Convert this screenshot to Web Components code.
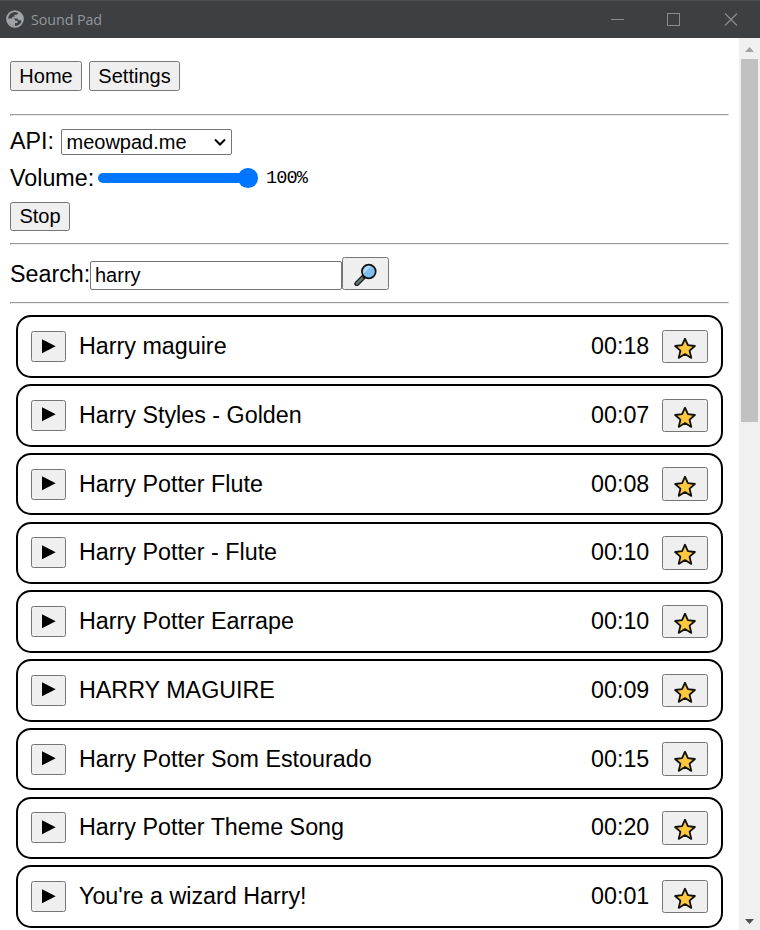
<!DOCTYPE html>
<html lang="en">
<head>
<meta charset="utf-8">
<title>Sound Pad</title>
<style>
html, body { margin: 0; height: 930px; overflow: hidden; background: #fff; }
body { font-family: "Liberation Sans", Arial, sans-serif; font-size: 23.300px; color: #000; }
</style>
</head>
<body>
<sound-pad></sound-pad>
<script>
const define = (name, html, setup) => {
  const template = document.createElement('template');
  template.innerHTML = html;
  customElements.define(name, class extends HTMLElement {
    constructor() {
      super();
      this.attachShadow({ mode: 'open' }).append(template.content.cloneNode(true));
    }
    connectedCallback() { if (setup) setup(this, this.shadowRoot); }
  });
};

define('title-bar', `
<style>
:host { display: flex; align-items: center; box-sizing: border-box; height: 38px; flex: none; background: #3c4043; border-top: 1px solid #4b4f52; color: #93979a; font: 14.300px "Open Sans", "Noto Sans", sans-serif; }
.globe { width: 18px; height: 18px; margin: 0 7px 2px 6px; }
.name { flex: 1; letter-spacing: -.08px; padding-bottom: 1px; }
.controls { display: flex; height: 37px; }
.controls svg { width: 57px; height: 37px; }
</style>
<svg class="globe" viewBox="0 0 18 18"><circle cx="9" cy="9" r="7.900" fill="none" stroke="#a0a4a8" stroke-width="1.900"/><path fill="#a0a4a8" d="M1.500 8.500h5.300c1.500 0 2.500 1 2.500 2.300h2.200v2.300H9v2.800c-3.900.3-7.400-3.200-7.500-7.400zM7.500 1.500h4.300v2c0 .8-.7 1.300-1.500 1.300H8.500v2H6.300v1.700h4.400c1.200 0 1.600.8 1.600 1.800h1.600c1 0 1.700.6 1.900 1.500 2.200-4.600-.4-10.300-5.800-10.300z"/></svg>
<span class="name"><slot></slot></span>
<div class="controls">
<svg viewBox="0 0 57 37" stroke="#888c8f" fill="none" shape-rendering="crispEdges"><path d="M22 18.500h13"/></svg>
<svg viewBox="0 0 57 37" stroke="#888c8f" fill="none" shape-rendering="crispEdges"><path d="M21.500 12.500h12v12h-12z"/></svg>
<svg viewBox="0 0 57 37" stroke="#888c8f" stroke-width="1.200" fill="none"><path d="M22 12.500l12 12m0-12l-12 12"/></svg>
</div>`);

define('scroll-rail', `
<style>
:host { display: flex; flex-direction: column; align-items: center; width: 21px; flex: none; background: #f0f0f0; }
svg { width: 21px; height: 21px; flex: none; }
.thumb { width: 17px; height: 363px; background: #c1c1c1; }
.rest { flex: 1; }
</style>
<svg viewBox="0 0 21 21"><path fill="#a3a3a3" d="M6 14l4.500-5 4.500 5z"/></svg>
<div class="thumb"></div><div class="rest"></div>
<svg viewBox="0 0 21 21"><path fill="#505050" d="M6 10h9l-4.500 5z"/></svg>`);

define('push-button', `
<style>
:host { display: flex; flex: none; }
button { display: flex; align-items: center; justify-content: center; box-sizing: border-box; width: 100%; height: 100%; margin: 0; padding: 0; border: 1px solid #767676; border-radius: 2.500px; background: #efefef; color: #000; font: 20px "Liberation Sans", Arial, sans-serif; }
</style>
<button><slot></slot></button>`);

define('rule-line', `
<style>:host { display: block; flex: none; box-sizing: border-box; height: 2px; border: 1px solid #9a9a9a; border-right-color: #eee; border-bottom-color: #eee; }</style>`);

define('api-select', `
<style>
:host { display: flex; align-items: center; justify-content: space-between; box-sizing: border-box; width: 171px; height: 26px; padding: 0 5px 0 4.500px; border: 1px solid #767676; border-radius: 2px; font-size: 20px; }
svg { width: 12px; height: 8px; }
</style>
<span><slot></slot></span>
<svg viewBox="0 0 12 8"><path d="M1 1.500l5 5 5-5" fill="none" stroke="#000" stroke-width="2"/></svg>`);

define('volume-slider', `
<style>
:host { display: flex; align-items: center; justify-content: flex-end; width: 160px; height: 20px; }
.track { flex: 1; height: 10px; border-radius: 5px; background: #0075ff; margin-right: -12px; }
.knob { width: 19.500px; height: 19.500px; border-radius: 50%; background: #0075ff; }
</style>
<div class="track"></div><div class="knob"></div>`);

define('search-field', `
<style>
:host { display: flex; }
input { box-sizing: border-box; width: 252px; height: 29px; margin: 0; padding: 0 4px; border: 1px solid #767676; border-radius: 2px; background: #fff; color: #000; font: 20px "Liberation Sans", Arial, sans-serif; outline: none; }
</style>
<input type="text">`, (host, root) => { root.querySelector('input').value = host.getAttribute('value'); });

define('lens-icon', `
<style>:host { display: block; width: 24px; height: 24px; margin-right: 1px; } svg { display: block; }</style>
<svg width="24" height="24" viewBox="0 0 24 24"><path d="M10.500 15l-6.700 6.700" stroke="#1a1a1a" stroke-width="5" stroke-linecap="round"/><path d="M9.200 16.300l-5.300 5.300" stroke="#66777a" stroke-width="2.500" stroke-linecap="round"/><circle cx="15.800" cy="9.500" r="6.900" fill="#83bdec" stroke="#111" stroke-width="1.700"/><path d="M10.500 11.800l7.600-7.600c-4.300-1.500-8.700 2.500-7.600 7.600z" fill="#b5daf7"/></svg>`);

define('play-icon', `
<style>:host { display: block; width: 14px; height: 16px; } svg { display: block; }</style>
<svg width="14" height="15" viewBox="0 0 14 15"><path d="M0 .3v14L13.700 7.300z"/></svg>`);

define('star-icon', `
<style>:host { display: block; width: 24px; height: 24px; padding-top: 3px; } svg { display: block; }</style>
<svg width="24" height="24" viewBox="0 0 24 24"><path d="M12 2.700l2.900 6.500 7 .8-5.300 4.700 1.700 7.200-6.300-3.800-6.300 3.800 1.700-7.200L2.100 10l7-.8z" fill="#ffc83d" stroke="#111" stroke-width="1.800" stroke-linejoin="round"/></svg>`);

define('sound-card', `
<style>
:host { display: flex; align-items: center; box-sizing: border-box; height: 62.500px; flex: none; border: 2px solid #000; border-radius: 15px; padding: 0 13px; background: #fff; }
.play { width: 35px; height: 31px; margin-right: 13px; }
.name { flex: 1; white-space: nowrap; }
.time { margin-right: 12.700px; }
.star { width: 46px; height: 33.500px; }
</style>
<push-button class="play"><play-icon></play-icon></push-button>
<span class="name"><slot></slot></span>
<span class="time"></span>
<push-button class="star"><star-icon></star-icon></push-button>`,
(host, root) => { root.querySelector('.time').textContent = host.getAttribute('time'); });

define('sound-pad', `
<style>
:host { display: flex; flex-direction: column; width: 760px; height: 930px; overflow: hidden; }
.body { display: flex; flex: 1; min-height: 0; }
main { display: flex; flex-direction: column; box-sizing: border-box; flex: 1; min-width: 0; overflow: hidden; padding: 23px 10px 0; }
.row { display: flex; align-items: center; flex: none; }
nav { gap: 7px; height: 30px; margin-bottom: 23px; }
.home { width: 72px; height: 30px; }
.settings { width: 91px; height: 30px; }
.api { height: 26px; margin-top: 13px; }
.api span { width: 51px; margin-top: -1px; }
.volume { height: 26px; margin-top: 10px; }
.volume .label { width: 84px; }
volume-slider { margin: 0 8.500px 0 3.500px; }
.percent { font: 18.600px "Liberation Mono", monospace; letter-spacing: -.9px; }
.stop { width: 60px; height: 29px; margin: 11px 0 12px; }
.search { height: 33px; margin: 12px 0; align-items: flex-end; }
.search span { align-self: center; width: 80px; padding-top: 2px; white-space: nowrap; }
.find { width: 47px; height: 33px; }
.list { display: flex; flex-direction: column; gap: 6.250px; padding: 11.300px 6px 0; }
</style>
<title-bar>Sound Pad</title-bar>
<div class="body">
<main>
<nav class="row"><push-button class="home">Home</push-button><push-button class="settings">Settings</push-button></nav>
<rule-line></rule-line>
<div class="row api"><span>API:</span><api-select>meowpad.me</api-select></div>
<div class="row volume"><span class="label">Volume:</span><volume-slider></volume-slider><span class="percent">100%</span></div>
<push-button class="stop">Stop</push-button>
<rule-line></rule-line>
<div class="row search"><span>Search:</span><search-field value="harry"></search-field><push-button class="find"><lens-icon></lens-icon></push-button></div>
<rule-line></rule-line>
<div class="list">
<sound-card time="00:18">Harry maguire</sound-card>
<sound-card time="00:07">Harry Styles - Golden</sound-card>
<sound-card time="00:08">Harry Potter Flute</sound-card>
<sound-card time="00:10">Harry Potter - Flute</sound-card>
<sound-card time="00:10">Harry Potter Earrape</sound-card>
<sound-card time="00:09">HARRY MAGUIRE</sound-card>
<sound-card time="00:15">Harry Potter Som Estourado</sound-card>
<sound-card time="00:20">Harry Potter Theme Song</sound-card>
<sound-card time="00:01">You're a wizard Harry!</sound-card>
</div>
</main>
<scroll-rail></scroll-rail>
</div>`);
</script>
</body>
</html>
